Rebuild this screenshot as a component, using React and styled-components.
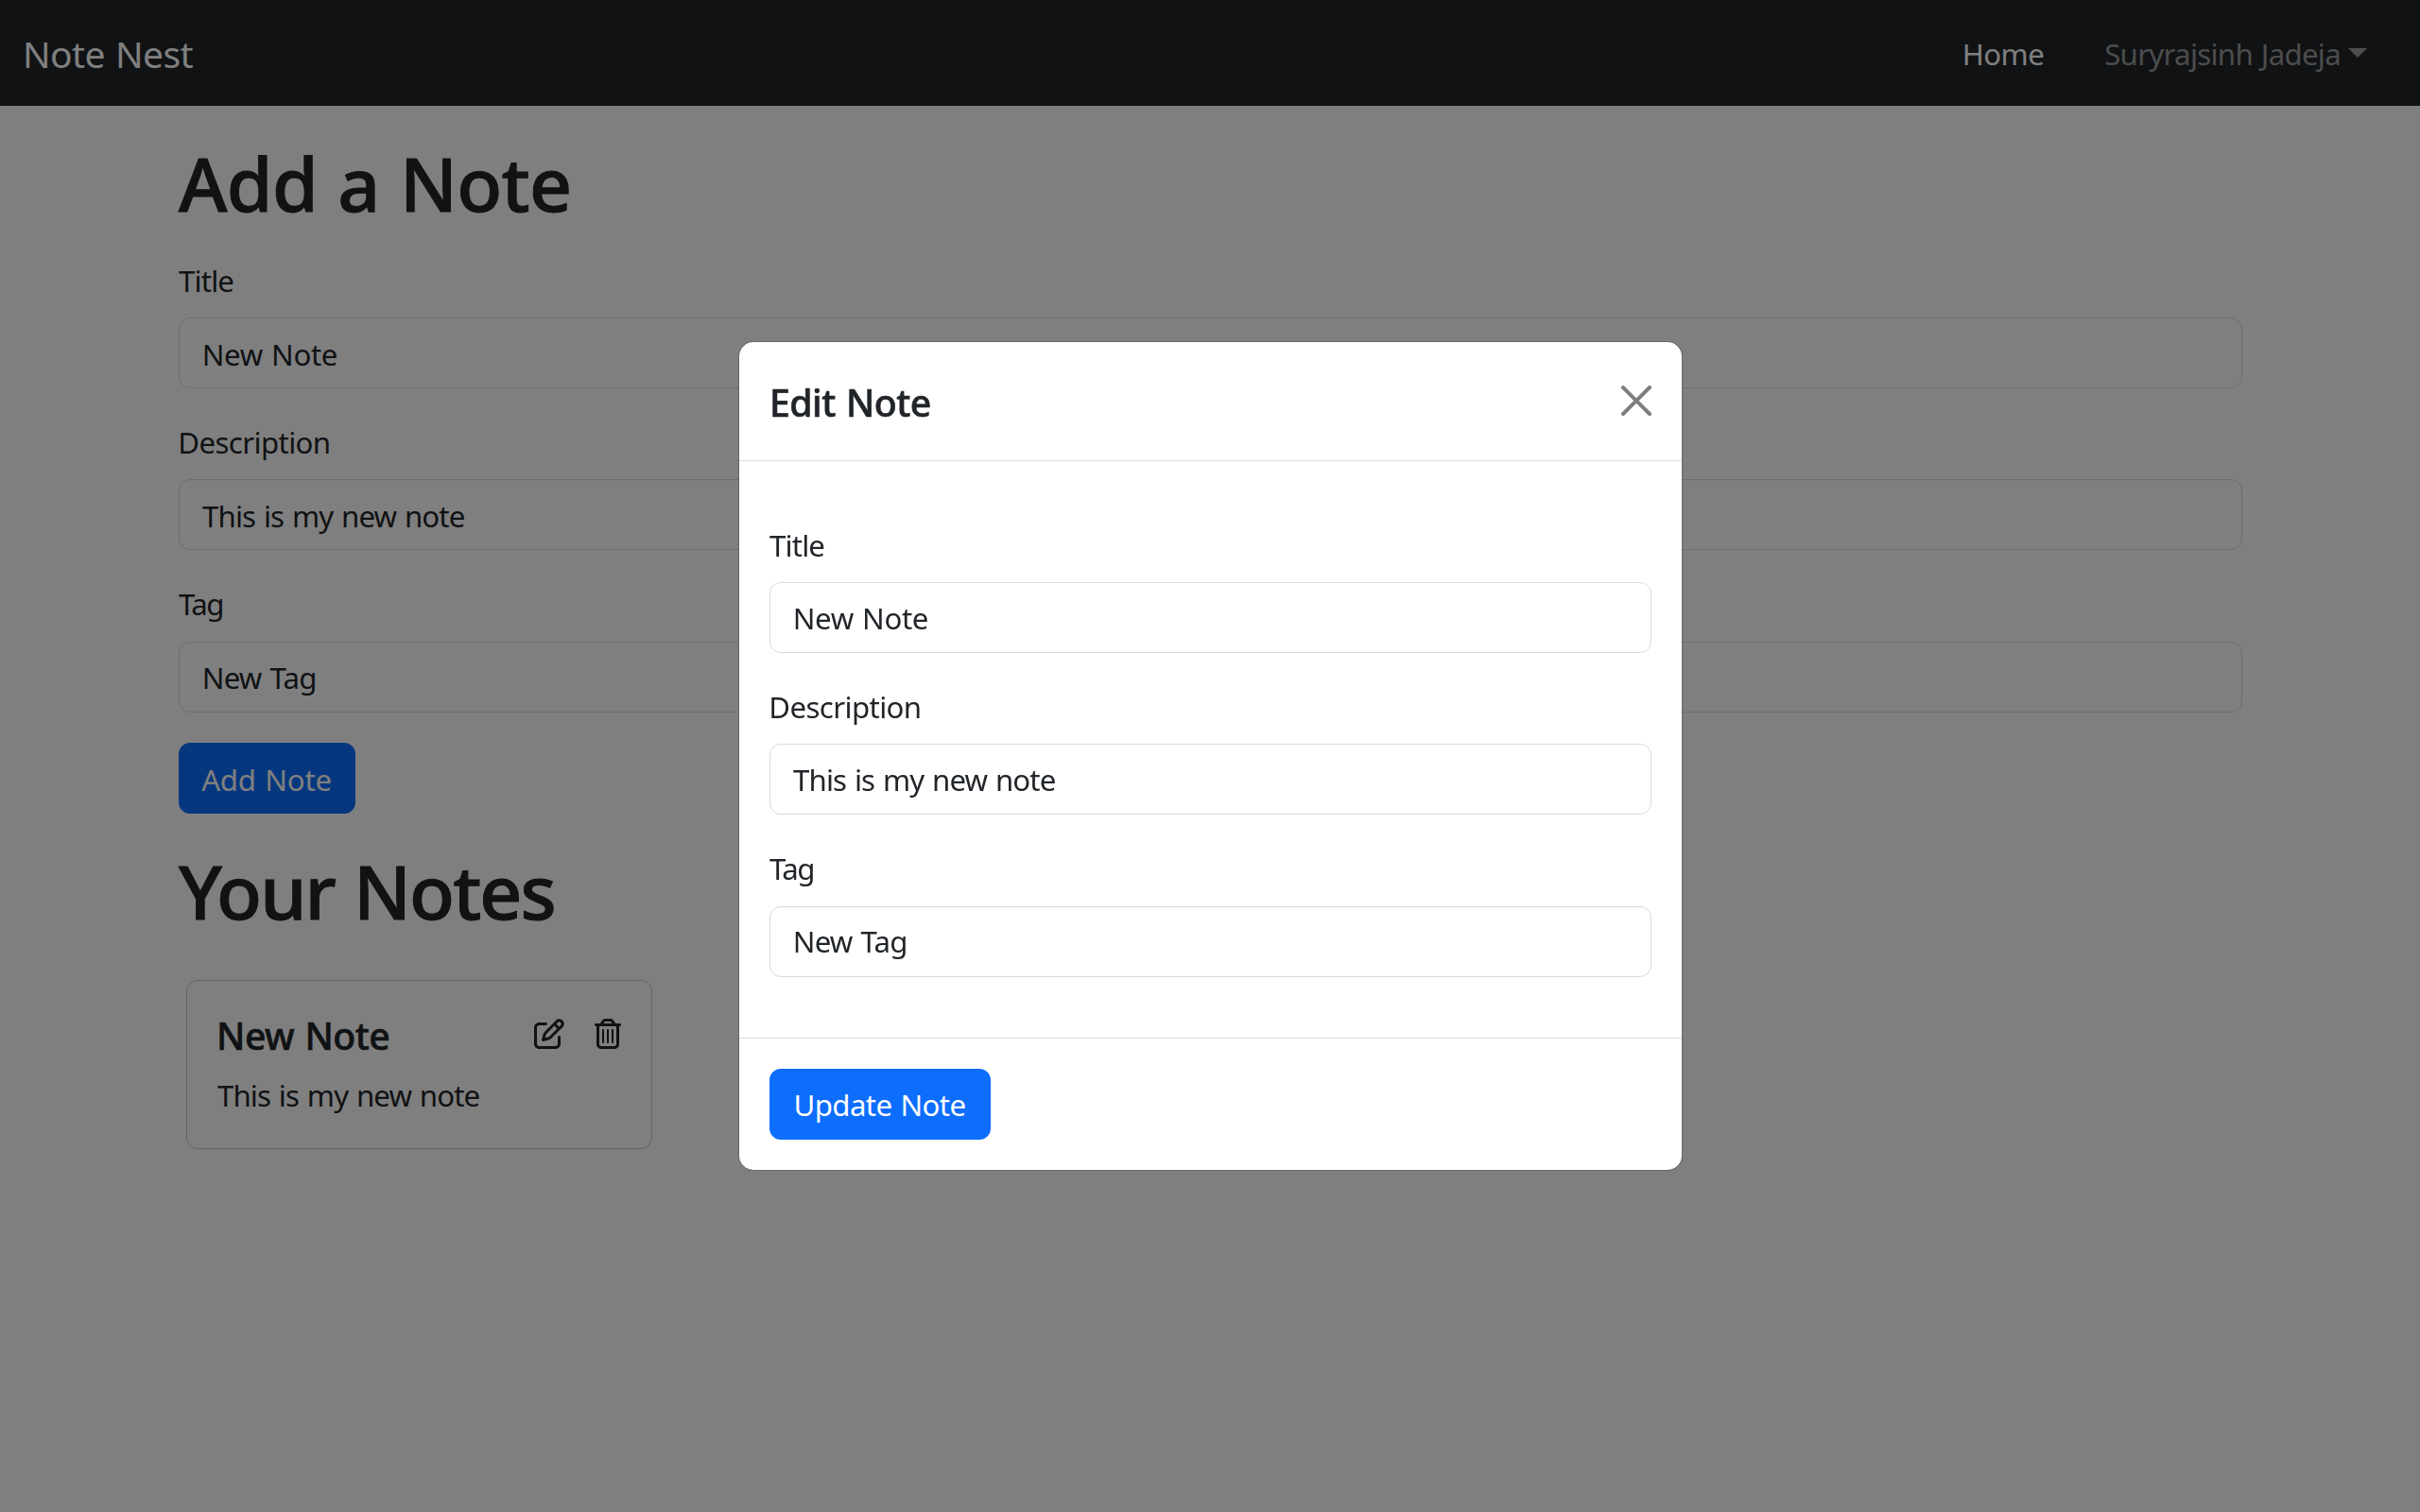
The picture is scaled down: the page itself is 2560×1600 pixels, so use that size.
import React, { useState } from 'react';
import styled, { createGlobalStyle } from 'styled-components';
import { FaRegPenToSquare, FaRegTrashCan } from 'react-icons/fa6';

const GlobalStyle = createGlobalStyle`
  *, *::before, *::after { box-sizing: border-box; }
  body {
    margin: 0;
    background: #fff;
    color: #212529;
    font-family: "Noto Sans", "Open Sans", sans-serif;
    font-size: 31.2px;
    line-height: 48px;
    word-spacing: 1.5px;
    overflow: hidden;
  }
`;

const Page = styled.div`
  min-height: 1600px;
`;

const Navbar = styled.nav`
  display: flex;
  align-items: center;
  justify-content: space-between;
  height: 112px;
  padding: 1px 56px 0 24px;
  background: #212529;
`;

const Brand = styled.a`
  color: #fff;
  font-size: 39px;
  line-height: 60px;
  letter-spacing: -0.6px;
`;

const NavLinks = styled.div`
  display: flex;
  align-items: center;
  gap: 64px;
`;

const NavLink = styled.a`
  display: flex;
  align-items: center;
  color: ${(p) => (p.$active ? '#fff' : 'rgba(255, 255, 255, 0.55)')};
  letter-spacing: ${(p) => p.$tracking}px;
`;

const Caret = styled.span`
  margin: 0 0 2px 8px;
  border-top: 10px solid;
  border-left: 10px solid transparent;
  border-right: 10px solid transparent;
`;

const Container = styled.main`
  width: 2184px;
  margin: 0 auto;
  padding: 34px 0 0 1px;
`;

const Heading = styled.h1`
  margin: ${(p) => p.$margin};
  font-size: 78.5px;
  font-weight: 500;
  line-height: 96px;
  letter-spacing: ${(p) => p.$tracking}px;
  -webkit-text-stroke: 1px currentColor;
`;

const Form = styled.form`
  display: flex;
  flex-direction: column;
  align-items: flex-start;
`;

const FieldGroup = styled.div`
  width: 100%;
  margin-bottom: 32px;
`;

const Label = styled.label`
  display: block;
  height: 48.2px;
  margin-bottom: 16px;
  padding-top: 0.7px;
  letter-spacing: ${(p) => p.$tracking}px;
  text-indent: ${(p) => p.$indent || 0}px;
`;

const Input = styled.input`
  display: block;
  width: 100%;
  height: 75px;
  padding: ${(p) => (p.$lowered ? 2 : 0)}px 24px 0;
  border: 1px solid #d6dbe0;
  border-radius: 12px;
  background: #fff;
  color: inherit;
  font: inherit;
  letter-spacing: ${(p) => p.$tracking}px;
  word-spacing: inherit;
  text-indent: ${(p) => p.$indent || 0}px;
  outline: none;
`;

const Button = styled.button`
  width: ${(p) => p.$width}px;
  height: 75px;
  padding: ${(p) => p.$drop || 0}px 1px 0 0;
  border: 0;
  border-radius: 12px;
  background: #0d6efd;
  color: #fff;
  font: inherit;
  letter-spacing: ${(p) => p.$tracking}px;
  word-spacing: inherit;
`;

const Card = styled.article`
  width: 493px;
  height: 179px;
  margin-left: 8px;
  padding: 33px 31px 33px 32px;
  border: 1px solid rgba(0, 0, 0, 0.22);
  border-radius: 12px;
`;

const CardHeader = styled.div`
  display: flex;
  align-items: center;
`;

const CardTitle = styled.h5`
  flex: 1;
  margin: 1px 0 -1px -1px;
  font-size: 39.2px;
  font-weight: 500;
  line-height: 48px;
  letter-spacing: -0.5px;
  -webkit-text-stroke: 0.6px currentColor;
`;

const CardActions = styled.div`
  display: flex;
  gap: 30px;
  margin: 0 -1px 2px 0;
  font-size: 32px;
  line-height: 0;
`;

const CardText = styled.p`
  margin: 16px 0 0;
  letter-spacing: -0.87px;
`;

const Backdrop = styled.div`
  position: fixed;
  inset: 0;
  display: flex;
  justify-content: center;
  align-items: center;
  padding-left: 1px;
  background: rgba(0, 0, 0, 0.5);
`;

const Dialog = styled.section`
  width: 999px;
  height: 878px;
  border: 1px solid rgba(0, 0, 0, 0.175);
  border-radius: 16px;
  background: #fff;
  background-clip: padding-box;
`;

const DialogHeader = styled.header`
  display: flex;
  align-items: center;
  justify-content: space-between;
  height: 126px;
  padding: 0 32px;
  border-bottom: 1px solid #d9dde2;
`;

const DialogTitle = styled.h5`
  margin: 2px 0 0;
  font-size: 39.2px;
  font-weight: 500;
  line-height: 60px;
  letter-spacing: -0.5px;
  -webkit-text-stroke: 0.6px currentColor;
`;

const CloseButton = styled.button`
  padding: 0 0 2px;
  border: 0;
  background: none;
  color: #000;
  opacity: 0.5;
  line-height: 0;
`;

const DialogBody = styled.div`
  padding: 64px 32px 32px;
`;

const DialogFooter = styled.footer`
  display: flex;
  padding: 32px;
  border-top: 1px solid #d9dde2;
`;

const FIELDS = [
  { name: 'title', label: 'Title', labelTracking: -0.83, labelIndent: 0, tracking: -0.35, indent: -0.3 },
  { name: 'description', label: 'Description', labelTracking: -0.6, labelIndent: -0.7, tracking: -0.86, indent: 0 },
  { name: 'tag', label: 'Tag', labelTracking: -1.5, labelIndent: 0, tracking: -0.75, indent: -0.3 },
];

function NoteFields({ prefix, note, onChange, lowered }) {
  return FIELDS.map((f) => (
    <FieldGroup key={f.name}>
      <Label htmlFor={prefix + f.name} $tracking={f.labelTracking} $indent={f.labelIndent}>
        {f.label}
      </Label>
      <Input
        id={prefix + f.name}
        value={note[f.name]}
        onChange={(e) => onChange({ ...note, [f.name]: e.target.value })}
        $tracking={f.tracking}
        $indent={f.indent}
        $lowered={lowered}
      />
    </FieldGroup>
  ));
}

const INITIAL = { title: 'New Note', description: 'This is my new note', tag: 'New Tag' };

export default function App() {
  const [draft, setDraft] = useState(INITIAL);
  const [edited, setEdited] = useState(INITIAL);

  return (
    <>
      <GlobalStyle />
      <Page>
        <Navbar>
          <Brand>Note Nest</Brand>
          <NavLinks>
            <NavLink $active $tracking={-0.6}>Home</NavLink>
            <NavLink $tracking={-0.7}>
              Suryrajsinh Jadeja
              <Caret />
            </NavLink>
          </NavLinks>
        </Navbar>

        <Container>
          <Heading $margin="0 0 30px" $tracking={-0.6}>Add a Note</Heading>
          <Form>
            <NoteFields prefix="new-" note={draft} onChange={setDraft} lowered />
            <Button type="button" $width={187} $tracking={-0.2} $drop={3}>Add Note</Button>
          </Form>

          <Heading $margin="34px 0 46px" $tracking={-1.85}>Your Notes</Heading>
          <Card>
            <CardHeader>
              <CardTitle>New Note</CardTitle>
              <CardActions>
                <FaRegPenToSquare />
                <FaRegTrashCan />
              </CardActions>
            </CardHeader>
            <CardText>This is my new note</CardText>
          </Card>
        </Container>
      </Page>

      <Backdrop>
        <Dialog role="dialog">
          <DialogHeader>
            <DialogTitle>Edit Note</DialogTitle>
            <CloseButton aria-label="Close">
              <svg width="32" height="32" viewBox="0 0 16 16" fill="currentColor">
                <path d="M.293.293a1 1 0 0 1 1.414 0L8 6.586 14.293.293a1 1 0 1 1 1.414 1.414L9.414 8l6.293 6.293a1 1 0 0 1-1.414 1.414L8 9.414l-6.293 6.293a1 1 0 0 1-1.414-1.414L6.586 8 .293 1.707a1 1 0 0 1 0-1.414z" />
              </svg>
            </CloseButton>
          </DialogHeader>
          <DialogBody>
            <NoteFields prefix="edit-" note={edited} onChange={setEdited} />
          </DialogBody>
          <DialogFooter>
            <Button type="button" $width={234} $tracking={-0.6} $drop={1}>Update Note</Button>
          </DialogFooter>
        </Dialog>
      </Backdrop>
    </>
  );
}
